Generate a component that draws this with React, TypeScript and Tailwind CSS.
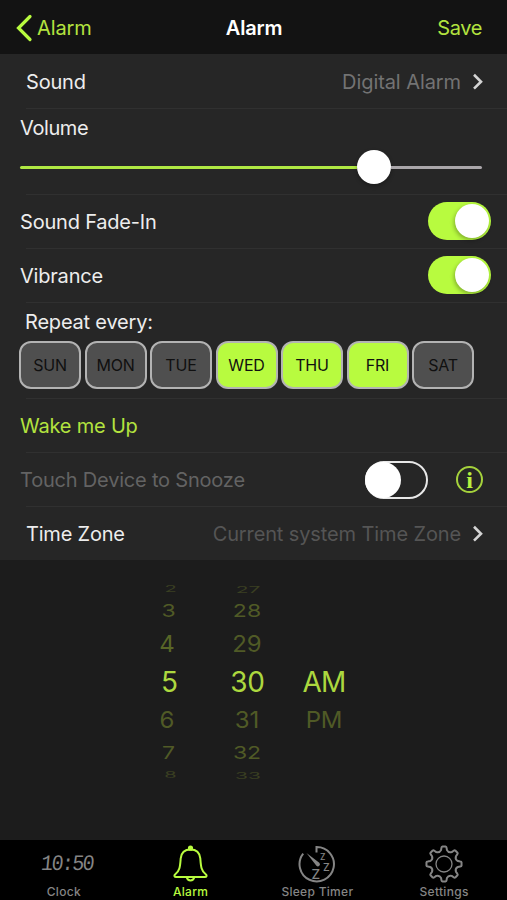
import type { ReactNode } from "react";

const days = [
  { name: "SUN", on: false },
  { name: "MON", on: false },
  { name: "TUE", on: false },
  { name: "WED", on: true },
  { name: "THU", on: true },
  { name: "FRI", on: true },
  { name: "SAT", on: false },
];

function Chevron() {
  return (
    <svg viewBox="0 0 12 18" className="ml-[11px] h-[18px] w-3 shrink-0" fill="none" stroke="#d4d4d4" strokeWidth="2.6">
      <path d="M2 1.800 9 8.700 2 15.600" />
    </svg>
  );
}

function Divider() {
  return <div className="ml-[26px] h-px shrink-0 bg-[#303030]" />;
}

function Toggle() {
  return (
    <div className="flex h-[38px] w-[63px] items-center justify-end rounded-full bg-[#b8fb3f] pr-[2px]">
      <div className="size-[34px] rounded-full bg-white shadow-[-1px_2px_4px_rgba(0,0,0,0.3)]" />
    </div>
  );
}

function Row({ children, className }: { children: ReactNode; className: string }) {
  return <div className={"flex items-center " + className}>{children}</div>;
}

const hours = [
  { text: "2", box: "h-[14px] pl-[5px]", face: "scale-y-[0.42] text-[20px] text-[#3a3f22]" },
  { text: "3", box: "h-[30px] pl-px", face: "scale-y-[0.78] text-[23px] text-[#505a26]" },
  { text: "4", box: "h-[36px] -ml-[2px]", face: "scale-y-[0.96] text-[24px] text-[#586627]" },
  { text: "5", box: "h-[40px] pl-[3px]", face: "text-[28px] text-[#acd83f]" },
  { text: "6", box: "h-[36px] -ml-[2px]", face: "scale-y-[0.96] text-[24px] text-[#505a26]" },
  { text: "7", box: "h-[30px] pl-px", face: "scale-y-[0.78] text-[23px] text-[#505a26]" },
  { text: "8", box: "h-[14px] pl-[5px]", face: "scale-y-[0.42] text-[20px] text-[#3a3f22]" },
];

const minutes = [
  { text: "27", box: "h-[14px] pl-[2px]", face: "scale-y-[0.42] text-[21px] text-[#3a3f22]" },
  { text: "28", box: "h-[30px]", face: "scale-y-[0.78] text-[23px] text-[#505a26]" },
  { text: "29", box: "h-[36px]", face: "scale-y-[0.96] text-[24px] text-[#505a26]" },
  { text: "30", box: "h-[40px] pl-px", face: "text-[28px] tracking-[-0.3px] text-[#acd83f]" },
  { text: "31", box: "h-[36px]", face: "scale-y-[0.96] text-[24px] text-[#505a26]" },
  { text: "32", box: "h-[30px]", face: "scale-y-[0.78] text-[23px] text-[#505a26]" },
  { text: "33", box: "h-[14px] pl-[2px]", face: "scale-y-[0.42] text-[21px] text-[#3a3f22]" },
];

function Wheel({ items, className }: { items: typeof hours; className: string }) {
  return (
    <div className={"flex flex-col items-center " + className}>
      {items.map((it) => (
        <div key={it.text} className={"flex items-center justify-center " + it.box}>
          <span className={"leading-none " + it.face}>{it.text}</span>
        </div>
      ))}
    </div>
  );
}

function gearPath() {
  const p = (r: number, deg: number) => {
    const a = ((deg - 90) * Math.PI) / 180;
    return `${(19 + r * Math.cos(a)).toFixed(2)} ${(19 + r * Math.sin(a)).toFixed(2)}`;
  };
  let d = "";
  for (let i = 0; i < 8; i++) {
    const a = i * 45;
    d += `${i ? "L" : "M"}${p(14.2, a - 12)}L${p(16.4, a - 9)}Q${p(17.6, a - 8)} ${p(17.6, a - 5)}L${p(17.6, a + 5)}Q${p(17.6, a + 8)} ${p(16.4, a + 9)}L${p(14.2, a + 12)}Q${p(11.8, a + 22.5)} ${p(14.2, a + 33)}`;
  }
  return d + "Z";
}

function Tab({ label, className, children }: { label: string; className: string; children: ReactNode }) {
  return (
    <div className={"flex flex-1 flex-col items-center " + className}>
      <div className="flex h-[43px] items-center pt-[4px]">{children}</div>
      <span className="pl-px text-[12px] leading-[17px] font-medium tracking-[0.3px]">{label}</span>
    </div>
  );
}

export default function App() {
  return (
    <div className="flex h-[900px] w-[507px] flex-col overflow-hidden bg-[#1c1c1c] font-['Inter','Liberation_Sans',sans-serif] text-[20px] tracking-[-0.2px] whitespace-nowrap text-[#ededed]">
      <header className="grid h-[54px] shrink-0 grid-cols-3 items-center bg-[#131313] pt-[2px] text-[#b3e33f]">
        <div className="flex items-center pl-[16px]">
          <svg viewBox="0 0 17 28" className="h-7 w-[17px]" fill="none" stroke="#b8fb3f" strokeWidth="3.2" strokeLinecap="round">
            <path d="M14 2.500 2.500 14 14 25.500" />
          </svg>
          <span className="ml-[4px] tracking-[-0.1px]">Alarm</span>
        </div>
        <h1 className="pl-px text-center font-semibold text-white">Alarm</h1>
        <span className="pr-[25px] text-right tracking-[-0.4px]">Save</span>
      </header>

      <main className="flex h-[506px] shrink-0 flex-col bg-[#262626]">
        <Row className="h-[54px] pt-[2px] pr-[23px] pl-[26px]">
          <span>Sound</span>
          <span className="ml-auto tracking-[-0.08px] text-[#737373]">Digital Alarm</span>
          <Chevron />
        </Row>
        <Divider />

        <section className="flex h-[85px] flex-col pr-[25px] pl-[20px]">
          <span className="mt-[7px] leading-[24px] tracking-[-0.4px]">Volume</span>
          <div className="mt-[9px] flex h-[37px] items-center">
            <div className="h-[3px] w-[337px] rounded-l-full bg-[#b0e843]" />
            <div className="-mt-[2px] size-[34px] rounded-full bg-white shadow-[0_2px_4px_rgba(0,0,0,0.3)]" />
            <div className="h-[3px] flex-1 rounded-r-full bg-[#aaa6aa]" />
          </div>
        </section>
        <Divider />

        <Row className="h-[53px] justify-between pr-[16px] pb-px pl-[20px]">
          <span className="pt-[2px]">Sound Fade-In</span>
          <Toggle />
        </Row>
        <Divider />
        <Row className="h-[53px] justify-between pr-[16px] pb-px pl-[20px]">
          <span className="pt-px">Vibrance</span>
          <Toggle />
        </Row>
        <Divider />

        <section className="flex h-[95px] flex-col pl-[19px]">
          <span className="mt-[7px] pl-[6px] leading-[24px]">Repeat every:</span>
          <div className="mt-[7px] flex gap-[3.5px]">
            {days.map((d) => (
              <div
                key={d.name}
                className={
                  "flex h-[48px] w-[62px] items-center justify-center rounded-[12px] border-2 border-[#b3b3b3] text-[16px] text-[#101010] " +
                  (d.on ? "bg-[#b8fb3f]" : "bg-[#4f4f4f]")
                }
              >
                {d.name}
              </div>
            ))}
          </div>
        </section>
        <Divider />

        <Row className="h-[53px] pl-[20px] text-[#b3e33f]">Wake me Up</Row>
        <Divider />
        <Row className="h-[53px] pr-[24px] pl-[20px] text-[#636363]">
          <span className="pt-px">Touch Device to Snooze</span>
          <div className="ml-auto flex h-[38px] w-[63px] items-center rounded-full border-2 border-[#e8e8e8]">
            <div className="-ml-[2px] size-[36px] shrink-0 rounded-full bg-white" />
          </div>
          <div className="ml-[28px] flex size-[27px] items-center justify-center rounded-full border-2 border-[#a5d23c] font-['Liberation_Serif',serif] text-[24px] leading-none font-bold text-[#b8f040]">
            i
          </div>
        </Row>
        <Divider />
        <Row className="h-[53px] pr-[23px] pl-[26px]">
          <span className="pt-px">Time Zone</span>
          <span className="ml-auto pt-px tracking-[-0.12px] text-[#555555]">Current system Time Zone</span>
          <Chevron />
        </Row>
      </main>

      <section className="flex h-[280px] shrink-0 pt-[22px] tracking-normal">
        <Wheel items={hours} className="ml-[144px] w-[48px]" />
        <Wheel items={minutes} className="ml-[19px] w-[72px]" />
        <div className="ml-[5px] flex w-[72px] flex-col items-center pt-[80px]">
          <span className="flex h-[40px] items-center text-[28px] tracking-[-0.8px] text-[#acd83f]">AM</span>
          <span className="flex h-[36px] scale-y-[0.96] items-center text-[24px] tracking-[-0.3px] text-[#505a26]">PM</span>
        </div>
      </section>

      <nav className="flex h-[60px] shrink-0 bg-black">
        <Tab label="Clock" className="text-[#858585]">
          <span className="ml-[7px] flex scale-y-110 -skew-x-6 font-['Liberation_Mono',monospace] text-[20px] leading-none tracking-[-1.6px]">10:50</span>
        </Tab>
        <Tab label="Alarm" className="text-[#b8fb3f]">
          <svg viewBox="0 0 36 38" className="h-[38px] w-9" fill="none" stroke="currentColor" strokeWidth="2">
            <circle cx="18.500" cy="3.200" r="1.600" fill="currentColor" />
            <path d="M18.500 4.400c-6 0-9.300 3.800-9.800 9-.6 7.600-.7 12.200-5.400 15.800-1.600 1.300-.8 2.900.8 2.900h28.800c1.600 0 2.400-1.600.8-2.900-4.700-3.600-4.800-8.200-5.400-15.800-.5-5.200-3.800-9-9.800-9Z" strokeLinejoin="round" />
            <path d="M14.800 32.500a3.800 3.800 0 0 0 7.400 0" />
          </svg>
        </Tab>
        <Tab label="Sleep Timer" className="text-[#858585]">
          <svg viewBox="0 0 38 38" className="size-[38px]" fill="none" stroke="currentColor" strokeWidth="2">
            <path d="M18.500 7.500V2A17.200 17.200 0 1 1 5.200 8.600" />
            <path d="M8.500 8 21.300 17.800a2 2 0 0 1-2.900 3Z" fill="currentColor" stroke="none" />
            <g fill="currentColor" stroke="none" fontFamily="Inter, sans-serif" fontWeight="500" letterSpacing="0">
              <text x="22" y="15" fontSize="8.500">Z</text>
              <text x="25" y="25.500" fontSize="10.500">Z</text>
              <text x="13.500" y="33.500" fontSize="13.500">Z</text>
            </g>
          </svg>
        </Tab>
        <Tab label="Settings" className="text-[#858585]">
          <svg viewBox="0 0 38 38" className="size-[38px]" fill="none" stroke="currentColor" strokeWidth="2" strokeLinejoin="round">
            <path d={gearPath()} />
            <circle cx="19" cy="19" r="8" strokeWidth="1.300" />
          </svg>
        </Tab>
      </nav>
    </div>
  );
}
